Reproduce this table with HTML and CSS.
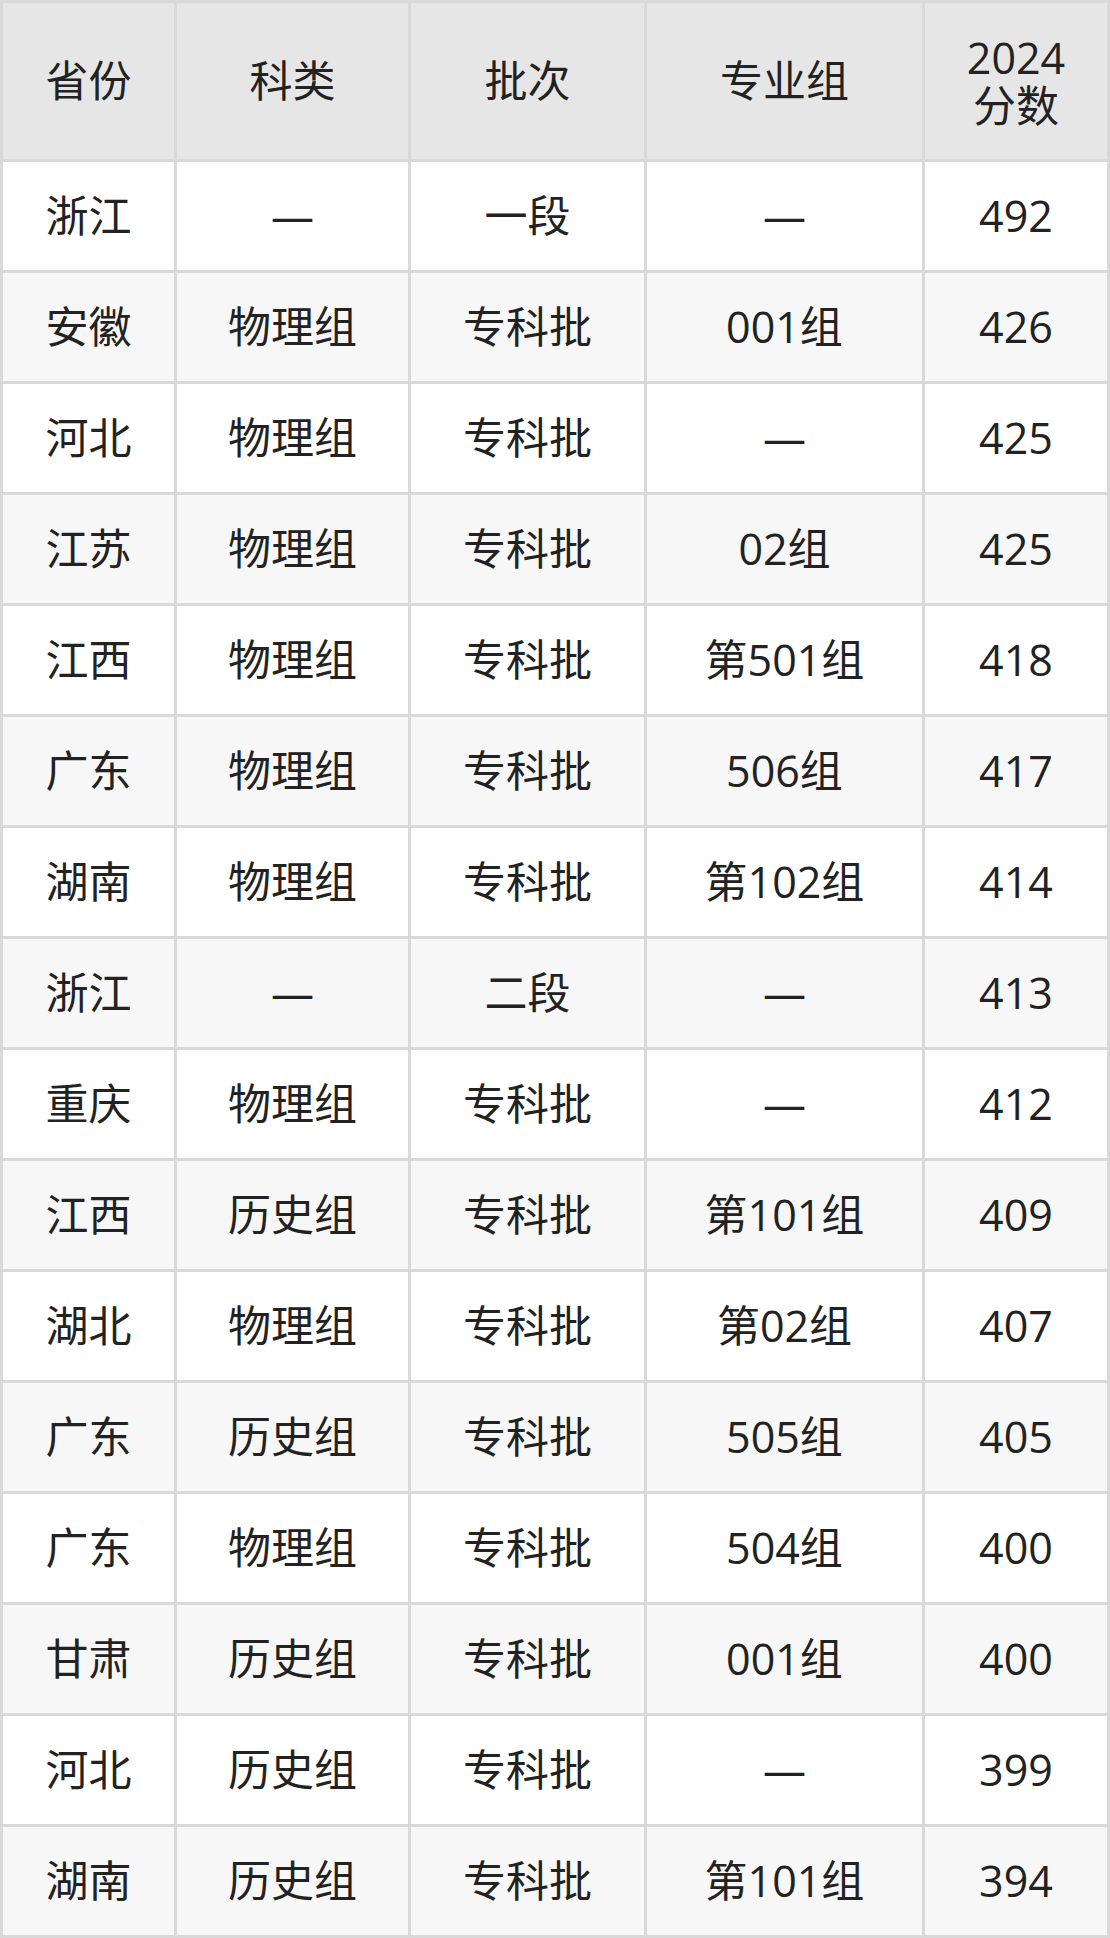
FILE: index.html
```html
<!DOCTYPE html>
<html lang="zh-CN">
<head>
<meta charset="utf-8">
<title>2024分数</title>
<link rel="stylesheet" href="styles.css">
</head>
<body>
<div class="table">
  <div class="row head">
    <div class="cell">省份</div><div class="cell">科类</div><div class="cell">批次</div><div class="cell">专业组</div><div class="cell two"><span class="ln">2024</span><span class="ln">分数</span></div>
  </div>
  <div class="row"><div class="cell">浙江</div><div class="cell">—</div><div class="cell">一段</div><div class="cell">—</div><div class="cell">492</div></div>
  <div class="row alt"><div class="cell">安徽</div><div class="cell">物理组</div><div class="cell">专科批</div><div class="cell">001组</div><div class="cell">426</div></div>
  <div class="row"><div class="cell">河北</div><div class="cell">物理组</div><div class="cell">专科批</div><div class="cell">—</div><div class="cell">425</div></div>
  <div class="row alt"><div class="cell">江苏</div><div class="cell">物理组</div><div class="cell">专科批</div><div class="cell">02组</div><div class="cell">425</div></div>
  <div class="row"><div class="cell">江西</div><div class="cell">物理组</div><div class="cell">专科批</div><div class="cell">第501组</div><div class="cell">418</div></div>
  <div class="row alt"><div class="cell">广东</div><div class="cell">物理组</div><div class="cell">专科批</div><div class="cell">506组</div><div class="cell">417</div></div>
  <div class="row"><div class="cell">湖南</div><div class="cell">物理组</div><div class="cell">专科批</div><div class="cell">第102组</div><div class="cell">414</div></div>
  <div class="row alt"><div class="cell">浙江</div><div class="cell">—</div><div class="cell">二段</div><div class="cell">—</div><div class="cell">413</div></div>
  <div class="row"><div class="cell">重庆</div><div class="cell">物理组</div><div class="cell">专科批</div><div class="cell">—</div><div class="cell">412</div></div>
  <div class="row alt"><div class="cell">江西</div><div class="cell">历史组</div><div class="cell">专科批</div><div class="cell">第101组</div><div class="cell">409</div></div>
  <div class="row"><div class="cell">湖北</div><div class="cell">物理组</div><div class="cell">专科批</div><div class="cell">第02组</div><div class="cell">407</div></div>
  <div class="row alt"><div class="cell">广东</div><div class="cell">历史组</div><div class="cell">专科批</div><div class="cell">505组</div><div class="cell">405</div></div>
  <div class="row"><div class="cell">广东</div><div class="cell">物理组</div><div class="cell">专科批</div><div class="cell">504组</div><div class="cell">400</div></div>
  <div class="row alt"><div class="cell">甘肃</div><div class="cell">历史组</div><div class="cell">专科批</div><div class="cell">001组</div><div class="cell">400</div></div>
  <div class="row"><div class="cell">河北</div><div class="cell">历史组</div><div class="cell">专科批</div><div class="cell">—</div><div class="cell">399</div></div>
  <div class="row alt"><div class="cell">湖南</div><div class="cell">历史组</div><div class="cell">专科批</div><div class="cell">第101组</div><div class="cell">394</div></div>
</div>
</body>
</html>
```

FILE: styles.css
```css
html, body {
  margin: 0;
  padding: 0;
  background: #ffffff;
}

.table {
  width: 1110px;
  box-sizing: border-box;
  padding: 3px;
  background: #d9d9d9;
  display: flex;
  flex-direction: column;
  gap: 3px;
  font-family: "Open Sans", "Noto Sans CJK SC", sans-serif;
  font-size: 43px;
  color: #222222;
}

.row {
  display: grid;
  grid-template-columns: 171px 231px 233px 275px 182px;
  gap: 3px;
  height: 108px;
}

.row.head {
  height: 156px;
}

.cell {
  display: flex;
  align-items: center;
  justify-content: center;
  text-align: center;
  background: #ffffff;
  line-height: 1.1;
  padding-bottom: 1px;
  box-sizing: border-box;
}

.row.alt .cell {
  background: #f7f7f7;
}

.row.head .cell {
  background: #e6e6e6;
}

.cell.two {
  flex-direction: column;
  padding-top: 2px;
  padding-bottom: 0;
}

.ln {
  display: block;
  height: 48px;
  line-height: 48px;
}
```
